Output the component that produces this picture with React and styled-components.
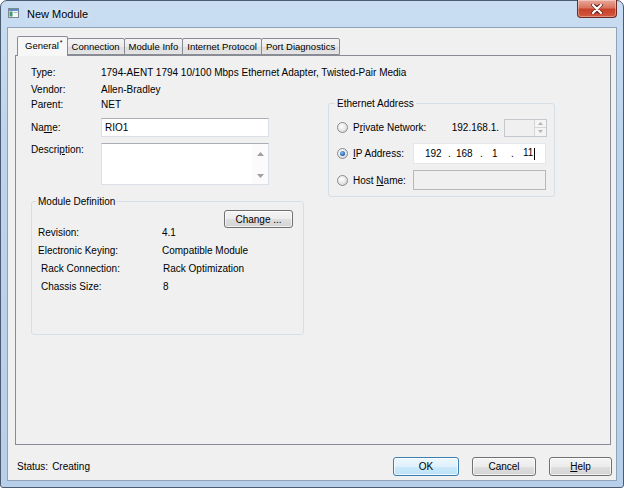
import React from 'react'
import styled, { createGlobalStyle } from 'styled-components'

const GlobalStyle = createGlobalStyle`
  html, body {
    margin: 0;
    padding: 0;
    width: 624px;
    height: 488px;
    overflow: hidden;
    background: #ffffff;
  }
  body {
    font-family: "Liberation Sans", Arial, sans-serif;
    font-size: 10px;
    color: #000;
  }
  * { box-sizing: border-box; }
`

const Frame = styled.div`
  width: 624px;
  height: 488px;
  border: 1px solid #4b5b70;
  border-radius: 7px 7px 3px 3px;
  background: linear-gradient(180deg, #c9ddf2 0%, #bcd4ec 30%, #b7cfe8 100%);
  display: flex;
  flex-direction: column;
  padding: 0 6px 6px 6px;
`

const TitleBar = styled.div`
  height: 26px;
  display: flex;
  align-items: flex-start;
`

const AppIcon = styled.svg`
  margin: 7px 0 0 1px;
  flex: none;
`

const Title = styled.div`
  margin: 6px 0 0 8px;
  font-size: 11px;
  line-height: 14px;
  color: #000;
  text-shadow: 0 0 6px rgba(255, 255, 255, 0.9);
`

const CloseButton = styled.div`
  margin: -1px 0 0 auto;
  width: 40px;
  height: 18px;
  border: 1px solid #6e2a1f;
  border-top: none;
  border-radius: 0 0 4px 4px;
  background: linear-gradient(180deg, #e9a99b 0%, #d9755f 45%, #c7422a 55%, #d2583d 100%);
  box-shadow: inset 0 0 0 1px rgba(255, 255, 255, 0.35);
  display: flex;
  align-items: center;
  justify-content: center;
`

const Client = styled.div`
  flex: 1;
  background: #f0f0f0;
  border: 1px solid #8ea3ba;
  display: flex;
  flex-direction: column;
  padding: 8px 5px 0 7px;
  min-height: 0;
`

const TabStrip = styled.div`
  height: 19px;
  display: flex;
  align-items: flex-end;
  padding-left: 2px;
  position: relative;
  z-index: 1;
`

const Tab = styled.div`
  height: ${(p) => (p.$active ? '20px' : '17px')};
  margin-bottom: ${(p) => (p.$active ? '-1px' : '0')};
  margin-left: -1px;
  padding: ${(p) => (p.$active ? '0 4px 0 7px' : '0 4px')};
  border: 1px solid #898c95;
  border-bottom: ${(p) => (p.$active ? 'none' : '1px solid #898c95')};
  border-radius: 2px 2px 0 0;
  background: ${(p) =>
    p.$active
      ? '#f7f7f7'
      : 'linear-gradient(180deg, #f4f4f4 0%, #ebebeb 50%, #dedede 51%, #e4e4e4 100%)'};
  font-size: 9.5px;
  line-height: ${(p) => (p.$active ? '17px' : '15px')};
  white-space: nowrap;
  color: #000;

  &:first-child {
    margin-left: 0;
  }

  sup {
    font-size: 7px;
    line-height: 0;
    margin-left: 1px;
  }
`

const Panel = styled.div`
  flex: 1;
  border: 1px solid #898c95;
  background: #f0f0f0;
  padding: 8px 0 0 15px;
  min-height: 0;
`

const InfoRow = styled.div`
  display: flex;
  height: ${(p) => p.$h || 17}px;
  line-height: ${(p) => p.$h || 17}px;
  align-items: ${(p) => (p.$top ? 'flex-start' : 'center')};
  margin-top: ${(p) => p.$mt || 0}px;
`

const Label = styled.div`
  width: ${(p) => p.$w || 70}px;
  flex: none;
  white-space: nowrap;
  line-height: ${(p) => (p.$top ? '12px' : 'inherit')};
  padding-top: ${(p) => (p.$top ? '1px' : '0')};
  padding-left: ${(p) => p.$indent || 0}px;
  color: #000;
`

const Value = styled.div`
  white-space: nowrap;
  padding-left: ${(p) => p.$indent || 0}px;
`

const Columns = styled.div`
  display: grid;
  grid-template-columns: 273px 227px;
  column-gap: 24px;
  align-items: start;
  margin-top: -1px;
`

const Column = styled.div`
  display: flex;
  flex-direction: column;
`

const TextBox = styled.div`
  width: ${(p) => p.$w || 168}px;
  height: ${(p) => p.$h || 19}px;
  border: 1px solid #dbdfe6;
  border-top-color: #abadb3;
  background: ${(p) => (p.$disabled ? '#f0f0f0' : '#ffffff')};
  padding: 0 3px;
  line-height: ${(p) => (p.$h || 19) - 2}px;
  display: flex;
  align-items: center;
  flex: none;
  ${(p) => p.$disabled && 'border-color: #b5b9be;'}
`

const TextArea = styled.div`
  width: 168px;
  height: 42px;
  border: 1px solid #dbdfe6;
  border-top-color: #abadb3;
  background: #ffffff;
  display: flex;
  justify-content: flex-end;
`

const ScrollTrack = styled.div`
  width: 16px;
  display: flex;
  flex-direction: column;
  justify-content: space-between;
  align-items: center;
  padding: 8px 0 6px;
  background: #fbfbfb;
`

const GroupBox = styled.fieldset`
  margin: ${(p) => p.$mt || 0}px 0 0 0;
  border: 1px solid #d5dfe5;
  border-radius: 3px;
  padding: ${(p) => p.$pad};
  min-width: 0;
`

const Legend = styled.legend`
  padding: 0 2px;
  margin-left: -2px;
  font-size: 10px;
  line-height: 13px;
`

const ButtonRow = styled.div`
  display: flex;
  justify-content: flex-end;
`

const Button = styled.div`
  width: ${(p) => p.$w}px;
  height: ${(p) => p.$h || 19}px;
  border: 1px solid ${(p) => (p.$default ? '#3c7fb1' : '#707070')};
  border-radius: 3px;
  background: ${(p) =>
    p.$default
      ? 'linear-gradient(180deg, #edf7fd 0%, #dff1fc 50%, #cbe9fb 51%, #bde3f8 100%)'
      : 'linear-gradient(180deg, #f4f4f4 0%, #ececec 50%, #dfdfdf 51%, #d3d3d3 100%)'};
  box-shadow: inset 0 0 0 1px rgba(255, 255, 255, 0.7);
  display: flex;
  align-items: center;
  justify-content: center;
  font-size: 10px;
  color: #000;
  flex: none;
`

const DefRows = styled.div`
  display: flex;
  flex-direction: column;
  gap: 5px;
  margin-top: -2px;
`

const DefRow = styled.div`
  display: flex;
  height: 13px;
  line-height: 13px;
`

const EthRow = styled.div`
  display: flex;
  align-items: center;
  height: ${(p) => p.$h}px;
  margin-top: ${(p) => p.$mt || 0}px;
`

const Radio = styled.span`
  width: 11px;
  height: 11px;
  border-radius: 50%;
  border: 1px solid #8b8b8b;
  background: radial-gradient(circle at 40% 35%, #ffffff 0%, #e6e6e6 55%, #c9c9c9 100%);
  margin-right: 5px;
  flex: none;
  display: flex;
  align-items: center;
  justify-content: center;

  &::after {
    content: '';
    display: ${(p) => (p.$checked ? 'block' : 'none')};
    width: 5px;
    height: 5px;
    border-radius: 50%;
    background: radial-gradient(circle at 40% 35%, #8cc4ef 0%, #2a6ab9 60%, #1b4d8c 100%);
  }
`

const RadioLabel = styled.div`
  width: ${(p) => p.$w || 60}px;
  white-space: nowrap;
  flex: none;
`

const Prefix = styled.div`
  flex: 1;
  text-align: right;
  padding-right: 5px;
  white-space: nowrap;
`

const SpinBox = styled.div`
  width: 43px;
  height: 18px;
  border: 1px solid #c4c7cc;
  background: #f0f0f0;
  display: flex;
  justify-content: flex-end;
  flex: none;
`

const SpinButtons = styled.div`
  width: 12px;
  display: flex;
  flex-direction: column;
  border-left: 1px solid #d6d6d6;
`

const SpinHalf = styled.div`
  flex: 1;
  display: flex;
  align-items: center;
  justify-content: center;
  background: #f4f4f4;
  & + & {
    border-top: 1px solid #d6d6d6;
  }
`

const IpField = styled.div`
  width: 133px;
  height: 21px;
  background: #ffffff;
  border: 1px solid #e3e6ea;
  display: flex;
  align-items: center;
  padding-left: 11px;
  font-size: 10px;
  flex: none;
`

const IpPart = styled.span`
  width: ${(p) => p.$w}px;
  text-align: ${(p) => p.$align || 'left'};
  white-space: nowrap;
`

const Caret = styled.span`
  display: inline-block;
  width: 1px;
  height: 12px;
  background: #000;
  margin-left: 1px;
  vertical-align: middle;
`

const Footer = styled.div`
  height: 35px;
  flex: none;
  display: flex;
  align-items: center;
  margin: 0 -5px 0 -7px;
  padding: 8px 4px 0 9px;
`

const Status = styled.div`
  flex: 1;
  white-space: nowrap;

  span {
    margin-left: 4px;
  }
`

const FooterButtons = styled.div`
  display: flex;
  gap: 13px;
`

const Arrow = ({ up }) => (
  <svg width="7" height="4" viewBox="0 0 7 4">
    <path d={up ? 'M0 4 L3.5 0 L7 4 Z' : 'M0 0 L3.5 4 L7 0 Z'} fill="#a0a0a0" />
  </svg>
)

const SmallArrow = ({ up }) => (
  <svg width="5" height="3" viewBox="0 0 5 3">
    <path d={up ? 'M0 3 L2.5 0 L5 3 Z' : 'M0 0 L2.5 3 L5 0 Z'} fill="#b4b4b4" />
  </svg>
)

const tabs = ['General', 'Connection', 'Module Info', 'Internet Protocol', 'Port Diagnostics']

export default function App() {
  return (
    <>
      <GlobalStyle />
      <Frame>
        <TitleBar>
          <AppIcon width="11" height="10" viewBox="0 0 11 10">
            <rect x="0.5" y="0.5" width="10" height="9" fill="#f4f6f8" stroke="#7d8894" />
            <rect x="1" y="1" width="10" height="2" fill="#5f8fbf" />
            <rect x="1.5" y="3.5" width="3" height="5" fill="#3f9a6a" />
            <rect x="5.5" y="4" width="4" height="1" fill="#b0b8c2" />
          </AppIcon>
          <Title>New Module</Title>
          <CloseButton>
            <svg width="12" height="10" viewBox="0 0 12 10">
              <path
                d="M2 1 L6 4 L10 1 M2 9 L6 6 L10 9"
                stroke="#5a2018"
                strokeWidth="3.6"
                fill="none"
                strokeLinecap="round"
              />
              <path
                d="M2 1 L10 9 M10 1 L2 9"
                stroke="#ffffff"
                strokeWidth="2.2"
                fill="none"
                strokeLinecap="round"
              />
            </svg>
          </CloseButton>
        </TitleBar>

        <Client>
          <TabStrip>
            {tabs.map((t, i) => (
              <Tab key={t} $active={i === 0}>
                {t}
                {i === 0 && <sup>*</sup>}
              </Tab>
            ))}
          </TabStrip>

          <Panel>
            <InfoRow>
              <Label>Type:</Label>
              <Value>1794-AENT 1794 10/100 Mbps Ethernet Adapter, Twisted-Pair Media</Value>
            </InfoRow>
            <InfoRow>
              <Label>Vendor:</Label>
              <Value>Allen-Bradley</Value>
            </InfoRow>

            <Columns>
              <Column>
                <InfoRow $h={16}>
                  <Label>Parent:</Label>
                  <Value>NET</Value>
                </InfoRow>
                <InfoRow $h={19} $mt={5}>
                  <Label>
                    Na<u>m</u>e:
                  </Label>
                  <TextBox>RIO1</TextBox>
                </InfoRow>
                <InfoRow $h={42} $mt={6} $top>
                  <Label $top>
                    Descri<u>p</u>tion:
                  </Label>
                  <TextArea>
                    <ScrollTrack>
                      <Arrow up />
                      <Arrow />
                    </ScrollTrack>
                  </TextArea>
                </InfoRow>

                <GroupBox $mt={10} $pad="2px 10px 41px 6px">
                  <Legend>Module Definition</Legend>
                  <ButtonRow>
                    <Button $w={69} $h={18}>
                      Change ...
                    </Button>
                  </ButtonRow>
                  <DefRows>
                    <DefRow>
                      <Label $w={124}>Revision:</Label>
                      <Value>4.1</Value>
                    </DefRow>
                    <DefRow>
                      <Label $w={124}>Electronic Keying:</Label>
                      <Value>Compatible Module</Value>
                    </DefRow>
                    <DefRow>
                      <Label $w={124} $indent={3}>
                        Rack Connection:
                      </Label>
                      <Value $indent={1}>Rack Optimization</Value>
                    </DefRow>
                    <DefRow>
                      <Label $w={124} $indent={3}>
                        Chassis Size:
                      </Label>
                      <Value $indent={1}>8</Value>
                    </DefRow>
                  </DefRows>
                </GroupBox>
              </Column>

              <Column>
                <GroupBox $pad="8px 7px 6px 8px">
                  <Legend>Ethernet Address</Legend>
                  <EthRow $h={19}>
                    <Radio />
                    <RadioLabel>
                      P<u>r</u>ivate Network:
                    </RadioLabel>
                    <Prefix>192.168.1.</Prefix>
                    <SpinBox>
                      <SpinButtons>
                        <SpinHalf>
                          <SmallArrow up />
                        </SpinHalf>
                        <SpinHalf>
                          <SmallArrow />
                        </SpinHalf>
                      </SpinButtons>
                    </SpinBox>
                  </EthRow>
                  <EthRow $h={21} $mt={6}>
                    <Radio $checked />
                    <RadioLabel>
                      <u>I</u>P Address:
                    </RadioLabel>
                    <IpField>
                      <IpPart $w={23}>192</IpPart>
                      <IpPart $w={8}>.</IpPart>
                      <IpPart $w={24}>168</IpPart>
                      <IpPart $w={12}>.</IpPart>
                      <IpPart $w={19}>1</IpPart>
                      <IpPart $w={12}>.</IpPart>
                      <IpPart $w={20}>
                        11
                        <Caret />
                      </IpPart>
                    </IpField>
                  </EthRow>
                  <EthRow $h={20} $mt={6}>
                    <Radio />
                    <RadioLabel>
                      Host <u>N</u>ame:
                    </RadioLabel>
                    <TextBox $w={133} $h={20} $disabled />
                  </EthRow>
                </GroupBox>
              </Column>
            </Columns>
          </Panel>

          <Footer>
            <Status>
              Status:<span>Creating</span>
            </Status>
            <FooterButtons>
              <Button $w={66} $default>
                OK
              </Button>
              <Button $w={64}>Cancel</Button>
              <Button $w={63}>
                <u>H</u>elp
              </Button>
            </FooterButtons>
          </Footer>
        </Client>
      </Frame>
    </>
  )
}
